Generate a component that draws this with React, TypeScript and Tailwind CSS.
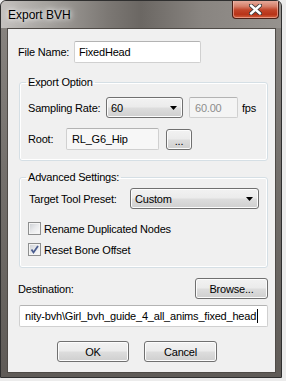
const btnBase =
  "flex items-center rounded-[3px] border border-[#707070] bg-[linear-gradient(180deg,#f2f2f2_0%,#ebebeb_48%,#dddddd_52%,#cfcfcf_100%)] shadow-[inset_0_0_0_1px_#fcfcfc]";
const btn = `${btnBase} justify-center`;

const field =
  "flex items-center rounded-[2px] border border-[#d0d0d0] border-t-[#b3b3b3]";

function Arrow() {
  return (
    <svg width="7" height="4" viewBox="0 0 7 4" className="shrink-0">
      <path d="M0 0H7L3.5 4Z" fill="#000" />
    </svg>
  );
}

function Combo({ value, width }: { value: string; width: string }) {
  return (
    <div className={`${btnBase} ${width} h-[21px] justify-between pl-[4px] pr-[5px]`}>
      <span>{value}</span>
      <Arrow />
    </div>
  );
}

function Check({ label, checked }: { label: string; checked?: boolean }) {
  return (
    <div className="flex items-center gap-[3px] h-[13px]">
      <div className="w-[13px] h-[13px] border border-[#8e8f8f] bg-[#f4f4f4] p-px">
        <div className="relative w-full h-full bg-[linear-gradient(135deg,#cfd2d6_0%,#e9eaec_50%,#f8f8f8_100%)]">
          {checked && (
            <svg width="11" height="11" viewBox="0 0 11 11" className="absolute -left-px -top-px">
              <path d="M2.5 5.5L4.5 8.5L9 2" fill="none" stroke="#4a5d8f" strokeWidth="1.8" />
            </svg>
          )}
        </div>
      </div>
      <span>{label}</span>
    </div>
  );
}

function CloseButton() {
  return (
    <div className="-mt-px w-[47px] h-[19px] rounded-b-[4px] border border-t-0 border-[#4b1f16] bg-[linear-gradient(180deg,#e9b2a4_0%,#d6806a_35%,#c2452a_55%,#b83318_80%,#d2603e_100%)] shadow-[inset_0_0_0_1px_rgba(255,210,200,0.5)] flex items-center justify-center">
      <svg width="13" height="11" viewBox="0 0 13 11">
        <path d="M2 1.5L11 9.5M11 1.5L2 9.5" stroke="#3a3a3a" strokeWidth="4.2" strokeLinecap="round" />
        <path d="M2 1.5L11 9.5M11 1.5L2 9.5" stroke="#ffffff" strokeWidth="2.4" strokeLinecap="round" />
      </svg>
    </div>
  );
}

export default function App() {
  return (
    <div className="w-[286px] h-[381px] bg-[#ececec] font-['Liberation_Sans',Arial,sans-serif] text-black">
      <div className="flex flex-col w-[282px] h-[378px] rounded-t-[6px] border border-[#2f2f2f] bg-[linear-gradient(180deg,#8a8682_0%,#74706c_45%,#5f5b57_100%)] overflow-hidden">
        {/* title bar */}
        <div className="flex h-[27px] shrink-0 items-start justify-between pl-[7px] pr-[2px] bg-[linear-gradient(90deg,#c4c1be_0%,#a6a39f_16%,#7c7874_38%,#6b6763_50%,#898581_72%,#96928e_100%)]">
          <span className="mt-[6px] text-[12px] leading-[16px] [text-shadow:0_0_5px_#fff,0_0_9px_#fff]">
            Export BVH
          </span>
          <CloseButton />
        </div>

        {/* client area */}
        <div className="ml-[6px] mr-[5px] mb-[4px] flex-1 flex flex-col border border-[#4f4b47] bg-[#f0f0f0] pl-[11px] pr-[7px] pt-[12px] text-[11px] leading-[14px] tracking-[-0.2px]">
          <div className="flex items-center h-[22px]">
            <span className="w-[56px] -ml-px">File Name:</span>
            <div className={`${field} w-[127px] h-[22px] bg-white pl-[4px]`}>FixedHead</div>
          </div>

          <fieldset className="mt-[12px] min-w-0 rounded-[3px] border border-[#d5dfe5] shadow-[inset_0_0_0_1px_#fff] pl-[8px] pt-[8px] pb-[10px]">
            <legend className="px-[2px] -ml-[2px]">Export Option</legend>
            <div className="flex items-center h-[21px]">
              <span className="w-[78px]">Sampling Rate:</span>
              <Combo value="60" width="w-[77px]" />
              <div className={`${field} ml-[6px] w-[49px] h-[21px] bg-[#f4f4f4] pl-[5px] text-[#8d8d8d]`}>60.00</div>
              <span className="ml-[4px]">fps</span>
            </div>
            <div className="flex items-center h-[22px] mt-[10px]">
              <span className="w-[38px]">Root:</span>
              <div className={`${field} w-[93px] h-[22px] bg-[#f7f7f7] pl-[5px]`}>RL_G6_Hip</div>
              <div className={`${btn} ml-[7px] w-[26px] h-[21px] pt-[3px]`}>...</div>
            </div>
          </fieldset>

          <fieldset className="mt-[9px] min-w-0 rounded-[3px] border border-[#d5dfe5] shadow-[inset_0_0_0_1px_#fff] pl-[8px] pt-[4px] pb-[11px]">
            <legend className="px-[2px] -ml-[2px]">Advanced Settings:</legend>
            <div className="flex items-center h-[21px]">
              <span className="w-[102px] pl-px">Target Tool Preset:</span>
              <Combo value="Custom" width="w-[129px]" />
            </div>
            <div className="mt-[13px] flex flex-col gap-[8px]">
              <Check label="Rename Duplicated Nodes" />
              <Check label="Reset Bone Offset" checked />
            </div>
          </fieldset>

          <div className="mt-[10px] flex items-center justify-between h-[21px]">
            <span className="-ml-px">Destination:</span>
            <div className={`${btn} w-[73px] h-[21px]`}>Browse...</div>
          </div>

          <div className={`${field} mt-[6px] h-[22px] bg-white pl-[5px] overflow-hidden whitespace-nowrap`}>
            <span>nity-bvh\Girl_bvh_guide_4_all_anims_fixed_head</span>
            <span className="ml-px w-px h-[14px] bg-black" />
          </div>

          <div className="mt-[14px] flex gap-[15px] pl-[38px]">
            <div className={`${btn} w-[72px] h-[21px] border-[#3c7fb1] shadow-[inset_0_0_0_1px_#7fd6f7]`}>OK</div>
            <div className={`${btn} w-[73px] h-[21px]`}>Cancel</div>
          </div>
        </div>
      </div>
    </div>
  );
}
